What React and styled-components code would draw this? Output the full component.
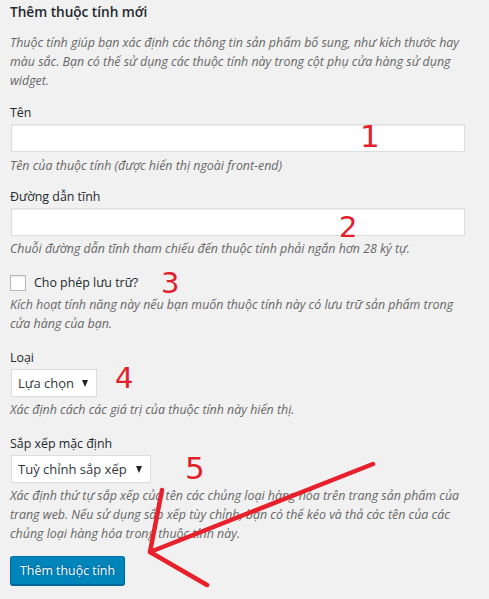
import styled, { createGlobalStyle } from "styled-components";

const GlobalStyle = createGlobalStyle`
  html, body {
    margin: 0;
    padding: 0;
    background: #f1f1f1;
  }
  body {
    font-family: "Open Sans", "Noto Sans", sans-serif;
    color: #23282d;
  }
  * {
    box-sizing: border-box;
  }
`;

const Page = styled.div`
  position: relative;
  width: 489px;
  height: 599px;
  overflow: hidden;
`;

const FormWrap = styled.form`
  width: 488px;
  padding: 2px 10px 0 10px;
  font-size: 12.4px;
  line-height: 19px;
`;

const Title = styled.h2`
  margin: 0;
  font-size: 13.6px;
  font-weight: 600;
  line-height: 19px;
  color: #23282d;
`;

const Description = styled.p`
  margin: ${(p) => p.$top || 4}px 0 0;
  max-width: ${(p) => (p.$max ? `${p.$max}px` : "none")};
  font-size: 12.4px;
  font-style: italic;
  line-height: 19px;
  color: #666;
`;

const Field = styled.div`
  margin-top: ${(p) => p.$top || 13}px;
`;

const Label = styled.label`
  display: block;
  font-size: 12.4px;
  line-height: 19px;
  color: #23282d;
`;

const TextInput = styled.input`
  display: block;
  width: 97%;
  height: 28px;
  margin: 2px 0 0 1px;
  padding: 3px 5px;
  border: 1px solid #ddd;
  background: #fff;
  box-shadow: inset 0 1px 2px rgba(0, 0, 0, 0.07);
  font: inherit;
  outline: none;
`;

const CheckRow = styled.label`
  display: flex;
  align-items: center;
  gap: 8px;
  font-size: 12.4px;
  line-height: 19px;
`;

const CheckBox = styled.input.attrs({ type: "checkbox" })`
  appearance: none;
  width: 16px;
  height: 16px;
  margin: 0;
  border: 1px solid #b4b9be;
  background: #fff;
  box-shadow: inset 0 1px 2px rgba(0, 0, 0, 0.1);
`;

const SelectBox = styled.div`
  position: relative;
  display: inline-flex;
  align-items: center;
  width: ${(p) => p.$width}px;
  height: 28px;
  margin: 2px 0 0 1px;
  background: #fff;
  border: 1px solid #ddd;
  box-shadow: 0 1px 1px -1px rgba(0, 0, 0, 0.1);
  select {
    appearance: none;
    width: 100%;
    height: 100%;
    border: 0;
    background: transparent;
    padding: 0 20px 0 6px;
    font-family: inherit;
    font-size: 13px;
    color: #32373c;
    outline: none;
  }
`;

const Caret = styled.span`
  position: absolute;
  right: 8px;
  top: 10px;
  width: 0;
  height: 0;
  border-left: 3.5px solid transparent;
  border-right: 3.5px solid transparent;
  border-top: 7px solid #222;
  pointer-events: none;
`;

const SubmitButton = styled.button`
  display: block;
  margin-top: 13px;
  height: 29px;
  padding: 0 9px 1px;
  border: 1px solid #0073aa;
  border-color: #0073aa #006799 #006799;
  border-radius: 3px;
  background: #0085ba;
  box-shadow: 0 1px 0 #006799;
  color: #fff;
  font-family: inherit;
  font-size: 12.4px;
  text-shadow: 0 -1px 1px #006799, 1px 0 1px #006799;
  cursor: pointer;
`;

const Mark = styled.span`
  position: absolute;
  left: ${(p) => p.$x}px;
  top: ${(p) => p.$y}px;
  font-family: "DejaVu Sans", sans-serif;
  font-size: ${(p) => p.$size}px;
  line-height: 1;
  color: #e21f2b;
  pointer-events: none;
`;

const Overlay = styled.svg`
  position: absolute;
  left: 0;
  top: 0;
  pointer-events: none;
`;

const marks = [
  { n: 1, x: 360, y: 121, size: 31 },
  { n: 2, x: 339, y: 213, size: 29 },
  { n: 3, x: 161, y: 269, size: 29 },
  { n: 4, x: 115, y: 364, size: 29 },
  { n: 5, x: 185, y: 453, size: 31 },
];

function Select({ width, value }) {
  return (
    <SelectBox $width={width}>
      <select defaultValue={value}>
        <option>{value}</option>
      </select>
      <Caret />
    </SelectBox>
  );
}

export default function App() {
  return (
    <Page>
      <GlobalStyle />
      <FormWrap onSubmit={(e) => e.preventDefault()}>
        <Title>Thêm thuộc tính mới</Title>
        <Description $top={12}>
          Thuộc tính giúp bạn xác định các thông tin sản phẩm bổ sung, như kích
          thước hay màu sắc. Bạn có thể sử dụng các thuộc tính này trong cột phụ
          cửa hàng sử dụng widget.
        </Description>

        <Field>
          <Label>Tên</Label>
          <TextInput type="text" />
          <Description>Tên của thuộc tính (được hiển thị ngoài front-end)</Description>
        </Field>

        <Field $top={12}>
          <Label>Đường dẫn tĩnh</Label>
          <TextInput type="text" />
          <Description $top={3}>
            Chuỗi đường dẫn tĩnh tham chiếu đến thuộc tính phải ngắn hơn 28 ký tự.
          </Description>
        </Field>

        <Field $top={15}>
          <CheckRow>
            <CheckBox />
            Cho phép lưu trữ?
          </CheckRow>
          <Description $top={3} $max={460}>
            Kích hoạt tính năng này nếu bạn muốn thuộc tính này có lưu trữ sản
            phẩm trong cửa hàng của bạn.
          </Description>
        </Field>

        <Field $top={15}>
          <Label>Loại</Label>
          <Select width={86} value="Lựa chọn" />
          <Description $top={3}>
            Xác định cách các giá trị của thuộc tính này hiển thị.
          </Description>
        </Field>

        <Field $top={15}>
          <Label>Sắp xếp mặc định</Label>
          <Select width={140} value="Tuỳ chỉnh sắp xếp" />
          <Description $top={3}>
            Xác định thứ tự sắp xếp của tên các chủng loại hàng hóa trên trang
            sản phẩm của trang web. Nếu sử dụng sắp xếp tùy chỉnh, bạn có thể kéo
            và thả các tên của các chủng loại hàng hóa trong thuộc tính này.
          </Description>
        </Field>

        <SubmitButton type="submit">Thêm thuộc tính</SubmitButton>
      </FormWrap>

      {marks.map((m) => (
        <Mark key={m.n} $x={m.x} $y={m.y} $size={m.size}>
          {m.n}
        </Mark>
      ))}

      <Overlay width="489" height="599" viewBox="0 0 489 599">
        <g fill="none" stroke="#e8202b" strokeWidth="4.5" strokeLinecap="round" strokeLinejoin="round">
          <path d="M373 464 L150 552" />
          <path d="M162 490 L150 552 L207 585" />
        </g>
      </Overlay>
    </Page>
  );
}
